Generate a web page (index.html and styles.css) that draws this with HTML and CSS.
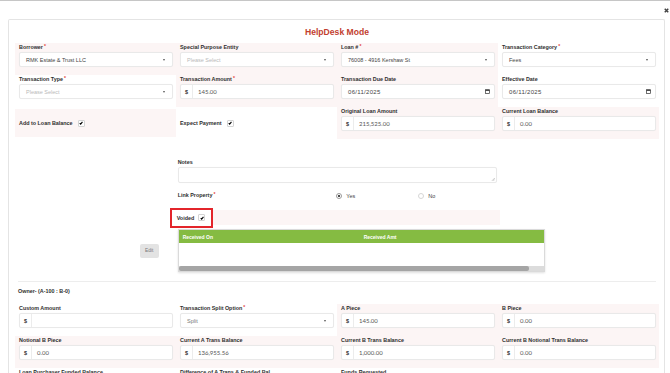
FILE: index.html
```html
<!DOCTYPE html>
<html lang="en">
<head>
    <meta charset="UTF-8">
    <title>HelpDesk Mode - Transaction</title>
    <link rel="stylesheet" href="styles.css">
</head>
<body>
<div class="top-shade"></div>
<div class="modal-head">
    <span class="close-btn">
        <svg width="5" height="5" viewBox="0 0 10 10"><path d="M1.5 1.5L8.5 8.5M8.5 1.5L1.5 8.5" stroke="#444" stroke-width="3"/></svg>
    </span>
</div>

<div class="modal-card">
    <h2 class="modal-title">HelpDesk Mode</h2>

    <div class="form-grid">
        <div class="field tinted">
            <label>Borrower<span class="req">*</span></label>
            <div class="control select"><span class="value">RMK Estate &amp; Trust LLC</span><span class="caret"></span></div>
        </div>
        <div class="field tinted">
            <label>Special Purpose Entity</label>
            <div class="control select"><span class="value placeholder">Please Select</span><span class="caret"></span></div>
        </div>
        <div class="field tinted">
            <label>Loan #<span class="req">*</span></label>
            <div class="control select"><span class="value">76008 - 4916 Kershaw St</span><span class="caret"></span></div>
        </div>
        <div class="field">
            <label>Transaction Category<span class="req">*</span></label>
            <div class="control select"><span class="value">Fees</span><span class="caret"></span></div>
        </div>

        <div class="field">
            <label>Transaction Type<span class="req">*</span></label>
            <div class="control select"><span class="value placeholder">Please Select</span><span class="caret"></span></div>
        </div>
        <div class="field tinted">
            <label>Transaction Amount<span class="req">*</span></label>
            <div class="control money"><span class="addon">$</span><span class="value num">145.00</span></div>
        </div>
        <div class="field tinted">
            <label>Transaction Due Date</label>
            <div class="control date"><span class="value">06/11/2025</span><span class="cal-icon"><svg width="5" height="5" viewBox="0 0 10 10"><rect x="1" y="1.5" width="8" height="7.5" fill="none" stroke="#333" stroke-width="1.4"/><rect x="1" y="1.5" width="8" height="2.2" fill="#333"/></svg></span></div>
        </div>
        <div class="field">
            <label>Effective Date</label>
            <div class="control date"><span class="value">06/11/2025</span><span class="cal-icon"><svg width="5" height="5" viewBox="0 0 10 10"><rect x="1" y="1.5" width="8" height="7.5" fill="none" stroke="#333" stroke-width="1.4"/><rect x="1" y="1.5" width="8" height="2.2" fill="#333"/></svg></span></div>
        </div>

        <div class="field check tinted">
            <label>Add to Loan Balance</label>
            <span class="checkbox"><svg viewBox="0 0 10 10"><path d="M1.8 5.4L4.2 7.8L8.6 2.4" stroke="#000" stroke-width="2.8" fill="none"/></svg></span>
        </div>
        <div class="field check">
            <label>Expect Payment</label>
            <span class="checkbox"><svg viewBox="0 0 10 10"><path d="M1.8 5.4L4.2 7.8L8.6 2.4" stroke="#000" stroke-width="2.8" fill="none"/></svg></span>
        </div>
        <div class="field tinted">
            <label>Original Loan Amount</label>
            <div class="control money"><span class="addon">$</span><span class="value num">215,525.00</span></div>
        </div>
        <div class="field tinted">
            <label>Current Loan Balance</label>
            <div class="control money"><span class="addon">$</span><span class="value num">0.00</span></div>
        </div>
    </div>

    <div class="form-grid extra-grid">
        <div class="field notes">
            <label>Notes</label>
            <div class="control textarea">
                <span class="grip"><svg width="4" height="4" viewBox="0 0 8 8"><path d="M7.5 2L2 7.5M7.5 5L5 7.5" stroke="#888" stroke-width="1"/></svg></span>
            </div>
        </div>

        <div class="field link-label">
            <label>Link Property<span class="req">*</span></label>
        </div>
        <div class="radios">
            <span class="radio-opt"><span class="radio on"></span>Yes</span>
            <span class="radio-opt"><span class="radio"></span>No</span>
        </div>

        <div class="voided-row">
            <span class="voided">Voided<span class="checkbox"><svg viewBox="0 0 10 10"><path d="M1.8 5.4L4.2 7.8L8.6 2.4" stroke="#000" stroke-width="2.8" fill="none"/></svg></span></span>
        </div>

        <div class="edit-cell">
            <button class="btn-edit">Edit</button>
        </div>
        <div class="payments">
            <div class="payments-head">
                <span class="col-on">Received On</span>
                <span>Received Amt</span>
            </div>
            <div class="payments-body"></div>
            <div class="hscroll"><span class="thumb"></span></div>
        </div>
    </div>

    <div class="divider"></div>
    <div class="owner">Owner- (A-100 : B-0)</div>

    <div class="form-grid owner-grid">
        <div class="field">
            <label>Custom Amount</label>
            <div class="control money"><span class="addon">$</span><span class="value num"></span></div>
        </div>
        <div class="field">
            <label>Transaction Split Option<span class="req">*</span></label>
            <div class="control select"><span class="value muted">Split</span><span class="caret"></span></div>
        </div>
        <div class="field tinted">
            <label>A Piece</label>
            <div class="control money"><span class="addon">$</span><span class="value num">145.00</span></div>
        </div>
        <div class="field tinted">
            <label>B Piece</label>
            <div class="control money"><span class="addon">$</span><span class="value num">0.00</span></div>
        </div>

        <div class="field tinted">
            <label>Notional B Piece</label>
            <div class="control money"><span class="addon">$</span><span class="value num">0.00</span></div>
        </div>
        <div class="field tinted">
            <label>Current A Trans Balance</label>
            <div class="control money"><span class="addon">$</span><span class="value num">136,955.56</span></div>
        </div>
        <div class="field tinted">
            <label>Current B Trans Balance</label>
            <div class="control money"><span class="addon">$</span><span class="value num">1,000.00</span></div>
        </div>
        <div class="field tinted">
            <label>Current B Notional Trans Balance</label>
            <div class="control money"><span class="addon">$</span><span class="value num">0.00</span></div>
        </div>

        <div class="field">
            <label>Loan Purchaser Funded Balance</label>
            <div class="control money"><span class="addon">$</span><span class="value num">0.00</span></div>
        </div>
        <div class="field">
            <label>Difference of A Trans &amp; Funded Bal</label>
            <div class="control money"><span class="addon">$</span><span class="value num">0.00</span></div>
        </div>
        <div class="field">
            <label>Funds Requested</label>
            <div class="control money"><span class="addon">$</span><span class="value num">0.00</span></div>
        </div>
        <div class="field"></div>
    </div>
</div>
</body>
</html>
```

FILE: styles.css
```css
* {
    box-sizing: border-box;
}
html, body {
    margin: 0;
    padding: 0;
}
body {
    background-color: #fff;
    font-family: "Liberation Sans", Arial, sans-serif;
    color: #333;
    height: 373px;
    overflow: hidden;
}
.top-shade {
    height: 1px;
    background-color: #c6c6c6;
}
.modal-head {
    height: 18px;
    display: flex;
    justify-content: flex-end;
    align-items: center;
    padding-right: 1px;
}
.close-btn {
    display: flex;
    width: 5px;
    height: 5px;
}
.modal-card {
    margin: 0 5px 0 8px;
    border: 1px solid #e4e4e4;
    border-bottom: 0;
    border-radius: 2px 2px 0 0;
    padding: 0 5px 0 6px;
}
.modal-title {
    margin: 7px 0 6px;
    text-align: center;
    font-size: 8.6px;
    line-height: 10px;
    font-weight: bold;
    color: #c2402f;
}

/* four column form */
.form-grid {
    display: grid;
    grid-template-columns: repeat(4, 1fr);
}
.field {
    padding: 1px 3px 8px 4px;
    min-width: 0;
}
.field.tinted {
    background-color: #fcf5f5;
}
.field label {
    display: block;
    height: 7px;
    font-size: 5.4px;
    line-height: 7px;
    font-weight: bold;
    margin-bottom: 1px;
    white-space: nowrap;
    color: #2f2f2f;
}
.req {
    color: #e2413a;
    font-size: 5px;
    line-height: 0;
    vertical-align: 1.5px;
    margin-left: 1px;
}
.control {
    height: 15px;
    border: 1px solid #e9e9e9;
    border-radius: 2px;
    background-color: #fff;
    display: flex;
    align-items: center;
    font-size: 5.5px;
    color: #444;
    box-shadow: 0 0 1px rgba(0,0,0,.04);
}
.control .value {
    flex: 1;
    white-space: nowrap;
    overflow: hidden;
}
.select .value {
    padding-left: 6px;
}
.placeholder {
    color: #b9b9b9;
}
.muted {
    color: #777;
}
.caret {
    width: 0;
    height: 0;
    border-left: 1.6px solid transparent;
    border-right: 1.6px solid transparent;
    border-top: 2px solid #555;
    margin-right: 7px;
}
.money .addon {
    width: 12px;
    height: 100%;
    display: flex;
    align-items: center;
    justify-content: center;
    font-weight: bold;
    font-size: 5.5px;
    color: #333;
    border-right: 1px solid #ececec;
}
.money .value {
    padding-left: 5px;
}
.num {
    font-family: Lato, "Liberation Sans", sans-serif;
    font-size: 6px;
    color: #555;
}
.date .value {
    padding-left: 6px;
    font-size: 6px;
    letter-spacing: .3px;
}
.cal-icon {
    display: flex;
    margin-right: 4px;
}

/* checkbox rows */
.field.check {
    display: flex;
    align-items: center;
    margin: 2px 0;
    padding: 0 3px 0 4px;
}
.field.check label {
    display: inline;
    margin: 0;
}
.checkbox {
    display: inline-flex;
    width: 7px;
    height: 7px;
    margin-left: 5px;
    border: 1px solid #d4d4d4;
    border-radius: 1px;
    background-color: #fff;
    padding: .5px;
}
.checkbox svg {
    width: 100%;
    height: 100%;
}

/* notes, link property, voided */
.extra-grid {
    margin-top: 19px;
}
.notes {
    grid-column: 2 / 4;
    padding-bottom: 0;
}
.textarea {
    height: 16px;
    align-items: flex-end;
    justify-content: flex-end;
    padding: 0 1px 1px 0;
}
.grip {
    display: flex;
}
.link-label {
    grid-column: 2;
    margin-top: 8px;
    padding-bottom: 0;
}
.radios {
    grid-column: 3;
    margin-top: 9px;
    display: flex;
    align-items: center;
    padding-left: 4px;
    font-size: 5.5px;
    color: #444;
}
.radio-opt {
    display: inline-flex;
    align-items: center;
    width: 82px;
}
.radio {
    width: 6px;
    height: 6px;
    border-radius: 50%;
    border: 1px solid #d6d6d6;
    background-color: #fff;
    margin-right: 4px;
    position: relative;
}
.radio.on {
    border-color: #9a9a9a;
}
.radio.on::after {
    content: "";
    position: absolute;
    left: 1px;
    top: 1px;
    width: 2px;
    height: 2px;
    border-radius: 50%;
    background-color: #111;
}
.voided-row {
    grid-column: 2 / 4;
    margin-top: 10px;
    height: 15px;
    background-color: #fcf5f5;
    display: flex;
    align-items: center;
}
.voided {
    display: inline-flex;
    align-items: center;
    height: 16px;
    margin-left: -2px;
    padding: 0 6px 0 5px;
    font-size: 5.4px;
    font-weight: bold;
    color: #2f2f2f;
    outline: 2px solid #e3252b;
    background-color: #fff;
}
.voided .checkbox {
    margin-left: 4px;
}
.edit-cell {
    grid-column: 1;
    margin-top: 4px;
    display: flex;
    justify-content: flex-end;
    align-items: center;
    padding-right: 15px;
}
.btn-edit {
    width: 19px;
    height: 14px;
    padding: 0;
    border: 0;
    border-radius: 2px;
    background-color: #e3e3e3;
    color: #777;
    font-family: "Liberation Sans", Arial, sans-serif;
    font-size: 4.8px;
}
.payments {
    grid-column: 2 / 5;
    margin: 4px 0 0 4px;
    width: 367px;
    border: 1px solid #dadada;
    box-shadow: 0 1px 2px rgba(0,0,0,.12);
}
.payments-head {
    height: 13px;
    background-color: #85bb42;
    display: flex;
    align-items: center;
    color: #fff;
    font-size: 5px;
    font-weight: bold;
}
.payments-head span {
    padding-left: 4px;
}
.payments-head .col-on {
    width: 181px;
}
.payments-body {
    height: 23px;
}
.hscroll {
    height: 5px;
    background-color: #dcdcdc;
    display: flex;
}
.hscroll .thumb {
    width: 350px;
    height: 100%;
    border-radius: 2px;
    background-color: #a5a5a5;
}
.divider {
    margin: 9px 3px 0;
    border-top: 1px solid #ededed;
}
.owner {
    margin: 6px 0 0 3px;
    font-size: 5.4px;
    line-height: 7px;
    font-weight: bold;
    color: #2f2f2f;
}
.owner-grid {
    margin-top: 9px;
}
```
